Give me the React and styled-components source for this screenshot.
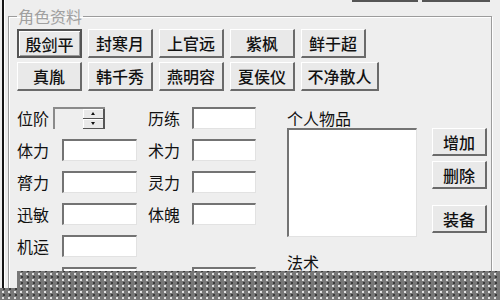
import React from 'react'
import styled, { createGlobalStyle } from 'styled-components'

const GlobalStyle = createGlobalStyle`
  html, body {
    margin: 0;
    width: 500px;
    height: 300px;
    overflow: hidden;
    background: #eeeeee;
  }
`

const heroes = [
  ['殷剑平', '封寒月', '上官远', '紫枫', '鲜于超'],
  ['真胤', '韩千秀', '燕明容', '夏侯仪', '不净散人'],
]

const stats = [
  ['体力', '术力'],
  ['膂力', '灵力'],
  ['迅敏', '体魄'],
  ['机运', null],
  ['潜力', '悟性'],
]

export default function App() {
  return (
    <Window>
      <GlobalStyle />
      <Frame>
        <TopStrip>
          <Stub $w={66} />
          <Stub $w={68} />
        </TopStrip>
        <GroupBox>
          <Legend>角色资料</Legend>
          <HeroRows>
            {heroes.map((row, r) => (
              <HeroRow key={r}>
                {row.map((name, i) => (
                  <HeroButton key={name} $wide={name.length > 3} $focused={r === 0 && i === 0}>
                    {name}
                  </HeroButton>
                ))}
              </HeroRow>
            ))}
          </HeroRows>
          <Details>
            <StatGrid>
              <Label>位阶</Label>
              <Spin>
                <SpinInput />
                <SpinArrows>
                  <SpinHalf><Arrow /></SpinHalf>
                  <SpinHalf><Arrow $down /></SpinHalf>
                </SpinArrows>
              </Spin>
              <span />
              <Label>历练</Label>
              <Edit $w={64} />
              {stats.map(([a, b]) => (
                <React.Fragment key={a}>
                  <Label>{a}</Label>
                  <Edit $w={75} $end />
                  <span />
                  {b ? <Label>{b}</Label> : <span />}
                  {b ? <Edit $w={64} /> : <span />}
                </React.Fragment>
              ))}
            </StatGrid>
            <Items>
              <Label>个人物品</Label>
              <ItemRow>
                <ListBox />
                <SideButtons>
                  <SideButton>增加</SideButton>
                  <SideButton>删除</SideButton>
                  <SideButton $gap={11}>装备</SideButton>
                </SideButtons>
              </ItemRow>
              <SpellLabel>法术</SpellLabel>
            </Items>
          </Details>
        </GroupBox>
      </Frame>
      <Dither />
    </Window>
  )
}

const Window = styled.div`
  position: relative;
  width: 500px;
  height: 300px;
  overflow: hidden;
  background: #eeeeee;
  padding-left: 2px;
  box-sizing: border-box;
  font-family: "Noto Sans CJK SC", "Noto Sans", sans-serif;
  color: #111;
`

const Frame = styled.div`
  height: 100%;
  border-left: 2px solid #151515;
  box-shadow: inset 1px 0 #ffffff;
`

const TopStrip = styled.div`
  height: 8px;
  display: flex;
  justify-content: flex-end;
  gap: 4px;
  padding-right: 10px;
`

const Stub = styled.div`
  width: ${p => p.$w}px;
  height: 2px;
  background: #555;
`

const GroupBox = styled.fieldset`
  margin: 0 8px 0 4px;
  padding: 5px 8px 0 8px;
  height: 330px;
  border: 1px solid #9c9c9c;
  box-shadow: inset 1px 1px #ffffff, 1px 1px #ffffff;
  min-width: 0;
`

const Legend = styled.legend`
  padding: 0 1px;
  font-size: 16px;
  line-height: 16px;
  color: #a0a0a0;
`

const HeroRows = styled.div`
  display: flex;
  flex-direction: column;
  gap: 4px;
`

const HeroRow = styled.div`
  display: flex;
  gap: 6px;
`

const HeroButton = styled.div`
  box-sizing: border-box;
  width: ${p => (p.$wide ? 78 : 65)}px;
  height: 29px;
  display: flex;
  align-items: center;
  justify-content: center;
  font-size: 16px;
  font-weight: 500;
  background: #e9e9e9;
  border-style: solid;
  border-width: ${p => (p.$focused ? '2px' : '1px 2px 2px 1px')};
  border-color: ${p => (p.$focused ? '#555' : '#ffffff #6a6a6a #6a6a6a #ffffff')};
  box-shadow: ${p => (p.$focused ? 'inset 1px 1px #fff, inset -1px -1px #999' : 'none')};
`

const Details = styled.div`
  display: flex;
  margin-top: 16px;
`

const StatGrid = styled.div`
  display: grid;
  grid-template-columns: 36px 84px 11px 44px 64px;
  grid-auto-rows: 22px;
  row-gap: 10px;
  align-items: center;
`

const Label = styled.div`
  font-size: 16px;
  line-height: 22px;
  white-space: nowrap;
`

const Edit = styled.div`
  box-sizing: border-box;
  width: ${p => p.$w}px;
  height: 22px;
  justify-self: ${p => (p.$end ? 'end' : 'start')};
  background: #ffffff;
  border-style: solid;
  border-width: 2px 1px 1px 2px;
  border-color: #737373 #e2e2e2 #e2e2e2 #737373;
`

const Spin = styled.div`
  box-sizing: border-box;
  width: 52px;
  height: 22px;
  display: flex;
  border-style: solid;
  border-width: 2px 0 0 2px;
  border-color: #8a8a8a;
`

const SpinInput = styled.div`
  flex: 1;
  background: #eeeeee;
`

const SpinArrows = styled.div`
  width: 22px;
  display: flex;
  flex-direction: column;
`

const SpinHalf = styled.div`
  flex: 1;
  display: flex;
  align-items: center;
  justify-content: center;
  background: #e9e9e9;
  border-right: 2px solid #555;
  border-bottom: 1px solid #555;
  box-shadow: inset 1px 1px #fff;
`

const Arrow = styled.span`
  width: 0;
  height: 0;
  border-left: 2px solid transparent;
  border-right: 2px solid transparent;
  border-${p => (p.$down ? 'top' : 'bottom')}: 3px solid #111;
`

const Items = styled.div`
  margin-left: 31px;
  display: flex;
  flex-direction: column;
`

const ItemRow = styled.div`
  display: flex;
  gap: 15px;
  margin-top: -1px;
`

const ListBox = styled.div`
  box-sizing: border-box;
  width: 130px;
  height: 109px;
  background: #ffffff;
  border-style: solid;
  border-width: 2px 1px 1px 2px;
  border-color: #737373 #e2e2e2 #e2e2e2 #737373;
`

const SideButtons = styled.div`
  display: flex;
  flex-direction: column;
  gap: 5px;
`

const SideButton = styled.div`
  box-sizing: border-box;
  width: 55px;
  height: 28px;
  margin-top: ${p => p.$gap || 0}px;
  display: flex;
  align-items: center;
  justify-content: center;
  font-size: 16px;
  font-weight: 500;
  background: #e9e9e9;
  border-style: solid;
  border-width: 1px 2px 2px 1px;
  border-color: #ffffff #6a6a6a #6a6a6a #ffffff;
`

const SpellLabel = styled(Label)`
  margin-top: 14px;
`

const Dither = styled.div`
  position: absolute;
  left: 0;
  top: 271px;
  width: 500px;
  height: 29px;
  background-color: #777777;
  background-image:
    radial-gradient(circle, #ffffff 0.6px, transparent 1.1px),
    radial-gradient(circle, #2a2a2a 0.6px, transparent 1.1px);
  background-size: 6px 6px;
  background-position: 0 0, 1px 3px;
  clip-path: polygon(17px 0, 100% 0, 100% 100%, 0 100%, 0 17px, 17px 17px);
`
